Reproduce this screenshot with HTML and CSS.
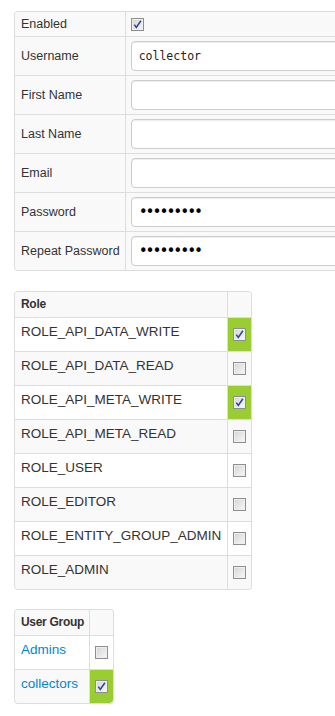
FILE: index.html
```html
<!DOCTYPE html>
<html lang="en">
<head>
  <meta charset="UTF-8" />
  <meta name="viewport" content="width=device-width, initial-scale=1.0" />
  <title>Edit User</title>
  <link rel="stylesheet" href="styles.css">
</head>
<body>
  <form id="user-form">
    <!-- account details -->
    <table class="grid details">
      <tr class="row-check">
        <td class="label">Enabled</td>
        <td class="field check-field">
          <span class="cb checked"><svg viewBox="0 0 11 11"><path d="M2.3 5.6 L4.3 8.4 L8.9 1.8" /></svg></span>
        </td>
      </tr>
      <tr>
        <td class="label">Username</td>
        <td class="field"><input type="text" class="text" value="collector" /></td>
      </tr>
      <tr>
        <td class="label">First Name</td>
        <td class="field"><input type="text" class="text" /></td>
      </tr>
      <tr>
        <td class="label">Last Name</td>
        <td class="field"><input type="text" class="text" /></td>
      </tr>
      <tr>
        <td class="label">Email</td>
        <td class="field"><input type="text" class="text" /></td>
      </tr>
      <tr>
        <td class="label">Password</td>
        <td class="field"><input type="password" class="text pass" value="secret123" /></td>
      </tr>
      <tr>
        <td class="label">Repeat Password</td>
        <td class="field"><input type="password" class="text pass" value="secret123" /></td>
      </tr>
    </table>

    <!-- roles -->
    <table class="grid striped roles">
      <tr>
        <th class="name">Role</th>
        <th class="check"></th>
      </tr>
      <tr>
        <td class="name">ROLE_API_DATA_WRITE</td>
        <td class="check on"><span class="cb checked"><svg viewBox="0 0 11 11"><path d="M2.3 5.6 L4.3 8.4 L8.9 1.8" /></svg></span></td>
      </tr>
      <tr>
        <td class="name">ROLE_API_DATA_READ</td>
        <td class="check"><span class="cb"></span></td>
      </tr>
      <tr>
        <td class="name">ROLE_API_META_WRITE</td>
        <td class="check on"><span class="cb checked"><svg viewBox="0 0 11 11"><path d="M2.3 5.6 L4.3 8.4 L8.9 1.8" /></svg></span></td>
      </tr>
      <tr>
        <td class="name">ROLE_API_META_READ</td>
        <td class="check"><span class="cb"></span></td>
      </tr>
      <tr>
        <td class="name">ROLE_USER</td>
        <td class="check"><span class="cb"></span></td>
      </tr>
      <tr>
        <td class="name">ROLE_EDITOR</td>
        <td class="check"><span class="cb"></span></td>
      </tr>
      <tr>
        <td class="name">ROLE_ENTITY_GROUP_ADMIN</td>
        <td class="check"><span class="cb"></span></td>
      </tr>
      <tr>
        <td class="name">ROLE_ADMIN</td>
        <td class="check"><span class="cb"></span></td>
      </tr>
    </table>

    <!-- groups -->
    <table class="grid striped groups">
      <tr>
        <th class="name">User Group</th>
        <th class="check"></th>
      </tr>
      <tr>
        <td class="name"><a href="#">Admins</a></td>
        <td class="check"><span class="cb"></span></td>
      </tr>
      <tr>
        <td class="name"><a href="#">collectors</a></td>
        <td class="check on"><span class="cb checked"><svg viewBox="0 0 11 11"><path d="M2.3 5.6 L4.3 8.4 L8.9 1.8" /></svg></span></td>
      </tr>
    </table>
  </form>
</body>
</html>
```

FILE: styles.css
```css
html, body { overflow-x: hidden; }
body {
  margin: 0;
  padding: 11px 0 0 14px;
  font-family: "Liberation Sans", Arial, sans-serif;
  color: #333;
  background: #fff;
}
form { margin: 0; }

/* bordered tables */
.grid {
  border: 1px solid #ddd;
  border-left: 0;
  border-collapse: separate;
  border-spacing: 0;
  border-radius: 4px;
  margin-bottom: 19px;
}
.grid td, .grid th {
  border-left: 1px solid #ddd;
  border-top: 1px solid #ddd;
}
.grid tr:first-child td, .grid tr:first-child th { border-top: 0; }
.grid tr:first-child > :first-child { border-top-left-radius: 4px; }
.grid tr:first-child > :last-child { border-top-right-radius: 4px; }
.grid tr:last-child > :first-child { border-bottom-left-radius: 4px; }
.grid tr:last-child > :last-child { border-bottom-right-radius: 4px; }

/* details */
.details { margin-bottom: 20px; }
.details td { background: #f9f9f9; vertical-align: middle; }
.details .label {
  width: 98px;
  padding: 0 5px 0 6px;
  font-size: 12.5px;
  line-height: 15px;
  white-space: nowrap;
}
.details .field { padding: 4px 0 4px 5px; }
.details .check-field { padding: 6px 5px 5px; }
.text {
  display: block;
  box-sizing: border-box;
  width: 240px;
  height: 30px;
  margin: 0;
  padding: 4px 7px;
  border: 1px solid #ccc;
  border-radius: 4px;
  box-shadow: inset 0 1px 1px rgba(0,0,0,0.075);
  background: #fff;
  font-family: "DejaVu Sans Mono", monospace;
  font-size: 11.5px;
  color: #222;
  outline: none;
}
.text.pass {
  font-size: 15px;
  letter-spacing: -2.1px;
  color: #000;
}

/* role / group lists */
.striped tr:nth-child(odd) > * { background: #f9f9f9; }
.striped th {
  text-align: left;
  font-size: 12px;
  font-weight: bold;
  line-height: 18px;
  letter-spacing: -0.3px;
  padding: 3px 5px 4px 6px;
  white-space: nowrap;
}
.striped td.name {
  padding: 4px 5px 9px 6px;
  font-size: 13.5px;
  line-height: 20px;
  white-space: nowrap;
  vertical-align: top;
}
.roles .name { width: 201px; }
.groups .name { width: 63px; }
.striped .check {
  width: 13px;
  padding: 0 5px;
  vertical-align: middle;
}
.striped tr > td.on { background: #9acd32; }
a { color: #0088cc; text-decoration: none; }

/* checkbox */
.cb {
  display: block;
  box-sizing: border-box;
  width: 13px;
  height: 13px;
  border: 1px solid #8f8f8f;
  background: linear-gradient(135deg, #d4d4d4, #f8f8f8);
  box-shadow: inset 0 0 0 1px #eee;
}
.cb svg { display: block; width: 11px; height: 11px; }
.cb path {
  fill: none;
  stroke: #2c4a9a;
  stroke-width: 1.6;
}
```
